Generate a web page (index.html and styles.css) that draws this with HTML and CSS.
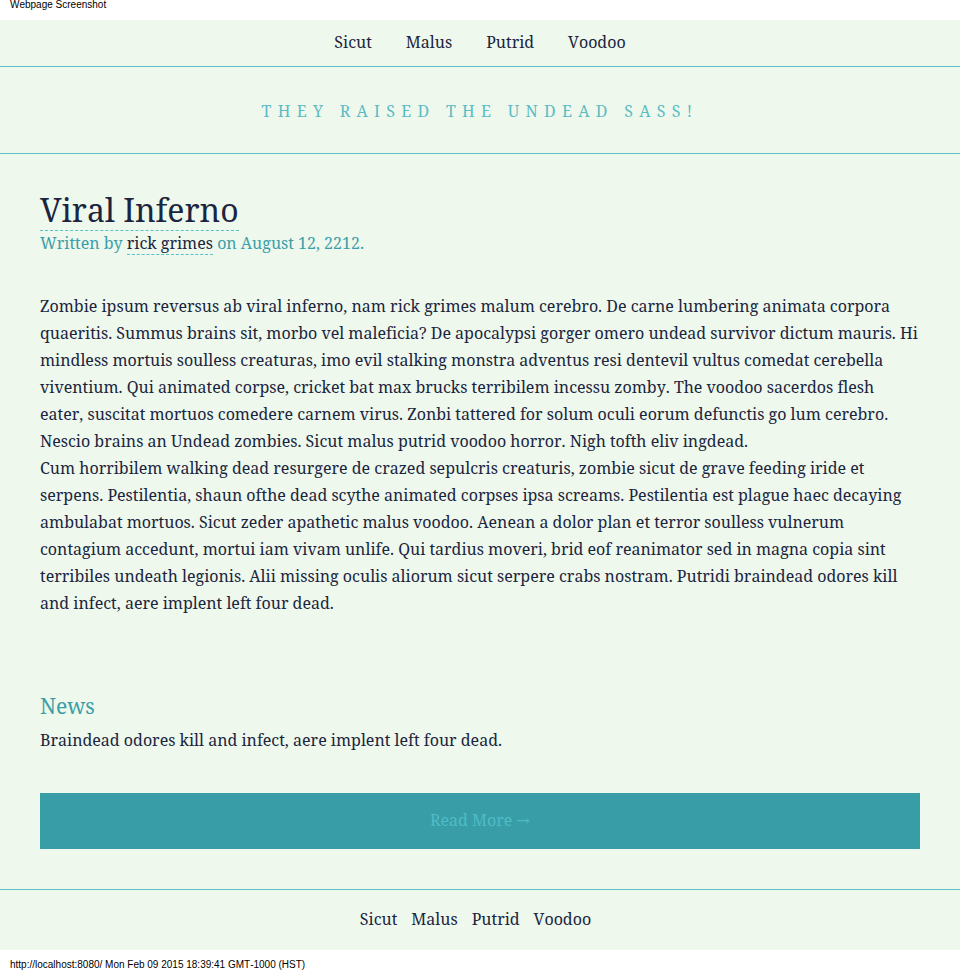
FILE: index.html
```html
<!DOCTYPE html>
<html>
<head>
<meta charset="utf-8">
<link rel="stylesheet" href="styles.css">
</head>
<body>
<div class="shot-head">Webpage Screenshot</div>
<div class="page">
  <nav class="top-nav">
    <a href="#">Sicut</a>
    <a href="#">Malus</a>
    <a href="#">Putrid</a>
    <a href="#">Voodoo</a>
  </nav>
  <header class="tagline">They raised the undead sass!</header>
  <main class="content">
    <article class="post">
      <h1 class="post-title">Viral Inferno</h1>
      <p class="byline">Written by <a href="#" class="author">rick grimes</a> on August 12, 2212.</p>
      <div class="post-body">
        <p>Zombie ipsum reversus ab viral inferno, nam rick grimes malum cerebro. De carne lumbering animata corpora quaeritis. Summus brains sit, morbo vel maleficia? De apocalypsi gorger omero undead survivor dictum mauris. Hi mindless mortuis soulless creaturas, imo evil stalking monstra adventus resi dentevil vultus comedat cerebella viventium. Qui animated corpse, cricket bat max brucks terribilem incessu zomby. The voodoo sacerdos flesh eater, suscitat mortuos comedere carnem virus. Zonbi tattered for solum oculi eorum defunctis go lum cerebro. Nescio brains an Undead zombies. Sicut malus putrid voodoo horror. Nigh tofth eliv ingdead.</p>
        <p>Cum horribilem walking dead resurgere de crazed sepulcris creaturis, zombie sicut de grave feeding iride et serpens. Pestilentia, shaun ofthe dead scythe animated corpses ipsa screams. Pestilentia est plague haec decaying ambulabat mortuos. Sicut zeder apathetic malus voodoo. Aenean a dolor plan et terror soulless vulnerum contagium accedunt, mortui iam vivam unlife. Qui tardius moveri, brid eof reanimator sed in magna copia sint terribiles undeath legionis. Alii missing oculis aliorum sicut serpere crabs nostram. Putridi braindead odores kill and infect, aere implent left four dead.</p>
      </div>
    </article>
    <section class="news">
      <h2 class="news-title">News</h2>
      <p class="news-text">Braindead odores kill and infect, aere implent left four dead.</p>
      <a href="#" class="read-more">Read More →</a>
    </section>
  </main>
  <footer class="bottom-nav">
    <a href="#">Sicut</a>
    <a href="#">Malus</a>
    <a href="#">Putrid</a>
    <a href="#">Voodoo</a>
  </footer>
</div>
<div class="shot-foot">http://localhost:8080/ Mon Feb 09 2015 18:39:41 GMT-1000 (HST)</div>
</body>
</html>
```

FILE: styles.css
```css
html, body {
  margin: 0;
  padding: 0;
  background: #ffffff;
}

body {
  font-family: "Noto Serif", "DejaVu Serif", serif;
  color: #1b2540;
  font-kerning: none;
  font-variant-ligatures: none;
}

.shot-head,
.shot-foot {
  font-family: "Liberation Sans", Arial, sans-serif;
  font-size: 10px;
  color: #000;
  background: #fff;
  line-height: 10px;
  padding: 0 10px;
  box-sizing: border-box;
}

.shot-head {
  height: 20px;
  padding-top: 0;
}

.shot-foot {
  height: 21px;
  padding-top: 10px;
}

.page {
  background: #eef8ec;
}

a {
  color: #1b2540;
  text-decoration: none;
}

.top-nav {
  height: 47px;
  box-sizing: border-box;
  display: flex;
  justify-content: center;
  align-items: center;
  gap: 34px;
  font-size: 16px;
  padding-bottom: 2px;
  border-bottom: 1px solid #5bc0c9;
}

.tagline {
  height: 87px;
  box-sizing: border-box;
  border-bottom: 1px solid #5bc0c9;
  display: flex;
  justify-content: center;
  align-items: center;
  text-transform: uppercase;
  letter-spacing: 6.3px;
  color: #5bbcc6;
  font-size: 16px;
  padding-top: 1px;
}

.content {
  padding: 36px 40px 40px;
}

.post-title {
  display: inline-block;
  margin: 0;
  font-size: 32px;
  font-weight: normal;
  line-height: 40px;
  border-bottom: 1px dashed #5bc0c9;
  color: #1b2540;
}

.byline {
  margin: 0;
  font-size: 16px;
  line-height: 24px;
  color: #3a9fa9;
}

.author {
  border-bottom: 1px dashed #5bc0c9;
}

.post-body {
  margin-top: 38px;
}

.post-body p {
  margin: 0;
  font-size: 16px;
  line-height: 27px;
}

.news {
  margin-top: 75px;
}

.news-title {
  margin: 0;
  font-size: 21px;
  font-weight: normal;
  line-height: 28px;
  color: #3a9fa9;
}

.news-text {
  margin: 8px 0 0;
  font-size: 16px;
  line-height: 24px;
}

.read-more {
  display: flex;
  justify-content: center;
  align-items: center;
  margin-top: 41px;
  height: 56px;
  background: #399da8;
  color: #4fbcc5;
  font-size: 16px;
  padding-bottom: 2px;
  box-sizing: border-box;
}

.bottom-nav {
  height: 61px;
  box-sizing: border-box;
  border-top: 1px solid #5bc0c9;
  display: flex;
  justify-content: center;
  align-items: center;
  gap: 14px;
  padding-right: 9px;
  padding-bottom: 2px;
  font-size: 16px;
}
```
